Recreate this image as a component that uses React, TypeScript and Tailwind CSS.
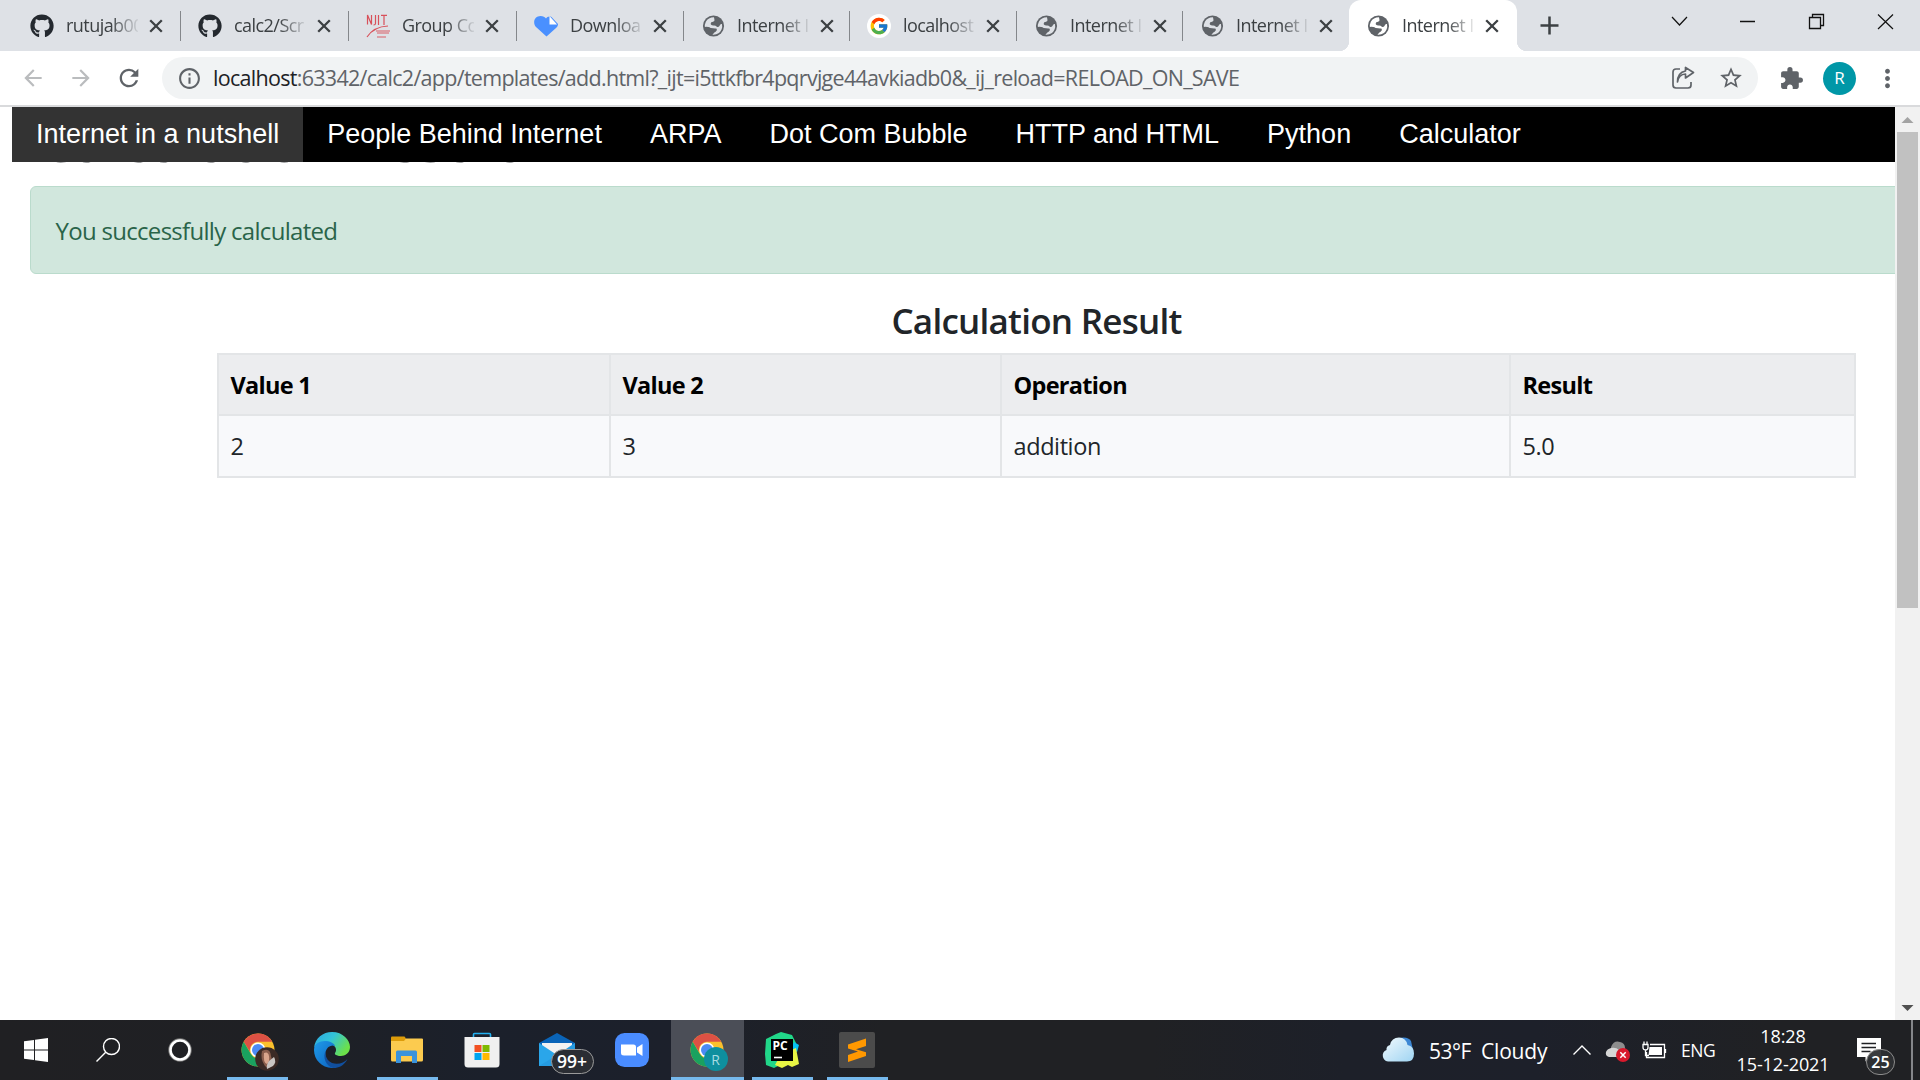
import React from "react";
import { FaGithub } from "react-icons/fa";
import { MdExtension, MdStarBorder, MdRefresh, MdArrowBack, MdArrowForward, MdInfoOutline, MdMoreVert } from "react-icons/md";
import { FcGoogle } from "react-icons/fc";

type TabKind = "github" | "njit" | "heart" | "globe" | "google";

const tabs: { kind: TabKind; label: string; width: string; active?: boolean }[] = [
  { kind: "github", label: "rutujab00", width: "w-[168px]" },
  { kind: "github", label: "calc2/Scr", width: "w-[168px]" },
  { kind: "njit", label: "Group Co", width: "w-[168px]" },
  { kind: "heart", label: "Downloa", width: "w-[167px]" },
  { kind: "globe", label: "Internet I", width: "w-[166px]" },
  { kind: "google", label: "localhost", width: "w-[167px]" },
  { kind: "globe", label: "Internet I", width: "w-[166px]" },
  { kind: "globe", label: "Internet I", width: "w-[166px]" },
  { kind: "globe", label: "Internet I", width: "w-[168px]", active: true },
];

function Favicon({ kind, active }: { kind: TabKind; active?: boolean }) {
  if (kind === "github") return <FaGithub className="size-6 text-[#24292f]" />;
  if (kind === "globe")
    return (
      <svg viewBox="0 0 24 24" className="ml-px size-[24px]">
        <circle cx="12" cy="12" r="11" fill="#5f6368" />
        <path
          d="M12.500 2.800Q6.500 2.800 4 7.500 2.600 10.500 3 13q3.500-.2 6 1.200 2.200 1.600 1 3.400-.6 1.400 1 3.400 7 .5 9.500-5.500 1-3 .3-5.500-1.800-.5-2.300 1.500-.7 2-3 1.200-1.500-1.500-3.500-1.200-2.500.2-3-1.500Q9 7.500 11.500 7.500q2-.2 1.500-2-.2-1.500-.5-2.700z"
          fill={active ? "#ffffff" : "#dee1e6"}
        />
        <path d="M9 14.200q4 .5 6 .3 1.500 1.500-.5 3.200-2 1-3.500 3.300-7-.5-8-8 3-.5 6 1.200z" fill="#5f6368" />
      </svg>
    );
  if (kind === "google")
    return (
      <span className="flex size-6 items-center justify-center rounded-full bg-white">
        <FcGoogle className="size-5" />
      </span>
    );
  if (kind === "njit")
    return (
      <svg viewBox="0 0 24 24" className="size-6" fill="none" stroke="#d8505a">
        <path d="M1.500 10.500V1l4 9.500V1M9.500 1v8.500q0 1.500-2 1.500M12.500 1v10M15 1.300h6M18 1.500v9.500" strokeWidth="1.200" />
        <path d="M1 23Q8 12.500 22 12" strokeWidth="1.200" />
        <path d="M10 17h14M11 19h12M11 23h9" strokeWidth="1.300" opacity=".6" />
      </svg>
    );
  return (
    <svg viewBox="0 0 24 24" className="size-6">
      <path d="M12.500 22.500 2 13C-2 8 1 2 6.500 2 9 2 11 3 12 4.500 13 3 15 2 17.500 3L24 10c0 2-1 3-2 4z" fill="#4a90ff" />
      <path d="M15.500 2v8.500H23z" fill="#fff" />
    </svg>
  );
}

function Tab({ kind, label, width, active }: (typeof tabs)[number]) {
  return (
    <div className={`${width} relative flex h-[51px] shrink-0 items-center ${active ? "rounded-t-[12px] bg-white" : ""}`}>
      {active && (
        <>
          <span className="absolute bottom-0 -left-2.5 size-2.5 bg-[radial-gradient(circle_at_0_0,transparent_10px,white_10.5px)]" />
          <span className="absolute -right-2.5 bottom-0 size-2.5 bg-[radial-gradient(circle_at_100%_0,transparent_10px,white_10.5px)]" />
        </>
      )}
      <span className="ml-[17px] flex w-6 justify-center">
        <Favicon kind={kind} active={active} />
      </span>
      <span className="-mt-px ml-3 w-[72px] overflow-hidden text-[18px] leading-6 tracking-[-0.55px] whitespace-nowrap text-[#3c4043] [mask-image:linear-gradient(to_right,black_62%,rgba(0,0,0,0.1)_100%)]">
        {label}
      </span>
      <svg viewBox="0 0 20 20" className="ml-[8px] size-5" stroke="#3c4043" strokeWidth="2.300">
        <path d="M4.200 4.200l11.600 11.600M15.800 4.200L4.200 15.800" />
      </svg>
    </div>
  );
}

function TabStrip() {
  return (
    <div className="flex h-[51px] bg-[#dee1e6] pl-[13px]">
      {tabs.map((t, i) => (
        <div key={i} className="relative">
          <Tab {...t} />
          {i < 7 && <span className="absolute top-[11px] right-0 h-[30px] w-[1.5px] bg-[#84878b]" />}
        </div>
      ))}
      <svg viewBox="0 0 25 25" className="mt-[13px] ml-[20px] size-[25px]" stroke="#3c4043" strokeWidth="2.500">
        <path d="M12.500 3.500v18M3.500 12.500h18" />
      </svg>
      <svg viewBox="0 0 260 51" className="ml-[98px] h-[51px] w-[260px]" fill="none" stroke="#111" strokeWidth="1.200">
        <path d="M12 17l7.500 8 7.500-8" />
        <path d="M80 21.500h15" strokeWidth="1.500" />
        <path d="M149.500 17.500h11v11h-11zM152.500 17.500v-3h11v11h-3" strokeWidth="1.300" />
        <path d="M218 14.500l15 14.500M233 14.500L218 29" />
      </svg>
    </div>
  );
}

function Toolbar() {
  return (
    <div className="flex h-14 items-center border-b-2 border-[#d9dadc] bg-white text-[#5f6368]">
      <MdArrowBack className="ml-5 size-[26px] text-[#babcbe]" />
      <MdArrowForward className="ml-[22px] size-[26px] text-[#babcbe]" />
      <MdRefresh className="ml-[21px] size-[28px]" />
      <div className="ml-[19px] flex h-[42px] w-[1596px] items-center rounded-full bg-[#f1f3f4]">
        <MdInfoOutline className="ml-[15px] size-[25px]" />
        <span className="ml-[11px] text-[21.500px] leading-7 tracking-[-0.71px] whitespace-nowrap text-[#5f6368]">
          <span className="text-[#202124]">localhost</span>:63342/calc2/app/templates/add.html?_ijt=i5ttkfbr4pqrvjge44avkiadb0&amp;_ij_reload=RELOAD_ON_SAVE
        </span>
        <svg viewBox="0 0 24 24" className="mr-[23px] ml-auto size-6" fill="none" stroke="currentColor" strokeWidth="1.700">
          <path d="M9 3H5Q2 3 2 6v13Q2 22 5 22h12q3 0 3-3v-3" />
          <path d="M6.500 16q1-7.500 8-8V12l8-5.500L14.500 1.500V5Q6.500 6.500 6.500 16z" strokeLinejoin="round" />
        </svg>
        <MdStarBorder className="mr-[14px] size-[26px]" />
      </div>
      <MdExtension className="ml-[21px] size-[25px]" />
      <span className="ml-[19px] flex size-[33px] items-center justify-center rounded-full bg-[#0097a7] text-[17px] text-white">R</span>
      <MdMoreVert className="ml-[17px] size-[29px]" />
    </div>
  );
}

const navItems = ["Internet in a nutshell", "People Behind Internet", "ARPA", "Dot Com Bubble", "HTTP and HTML", "Python", "Calculator"];

function Page() {
  return (
    <div className="flex h-[913px]">
      <main className="w-[1895px] overflow-hidden">
        <nav className="relative z-10 ml-3 flex h-[55px] bg-black font-['Liberation_Sans',sans-serif] text-[27px] leading-[55px] whitespace-nowrap text-white">
          {navItems.map((n, i) => (
            <a key={n} className={`px-6 ${i === 0 ? "bg-[#333]" : ""}`}>
              {n}
            </a>
          ))}
        </nav>
        <h1 className="-mt-[64px] ml-[38px] h-[64px] text-[59px] leading-[82px] font-semibold tracking-[-1.9px] whitespace-nowrap text-[#4a4d50]">Calculation Result</h1>
        <div className="mt-6 ml-[30px] flex h-[88px] w-[1900px] items-center rounded-md border-[1.500px] border-[#badbcc] bg-[#d1e7dd] pt-px pl-[24.500px] text-[24px] tracking-[-0.7px] text-[#2a6449]">
          You successfully calculated
        </div>
        <div className="mt-[24px] ml-[217px] w-[1639px]">
          <h2 className="h-[55px] text-center text-[35px] leading-[46px] font-semibold tracking-[-0.75px] text-[#212529]">Calculation Result</h2>
          <div className="grid grid-cols-[392px_391px_509px_345px] border-t-2 border-l-2 border-[#e3e5e7] text-[23.500px] text-[#212529]">
            {["Value 1", "Value 2", "Operation", "Result"].map((t) => (
              <div key={t} className="h-[61px] border-r-2 border-b-2 border-[#e3e5e7] bg-[#ecedef] pl-[11.500px] leading-[61px] font-bold tracking-[-0.7px] text-black">
                {t}
              </div>
            ))}
            {["2", "3", "addition", "5.0"].map((t) => (
              <div key={t} className="h-[62px] border-r-2 border-b-2 border-[#e3e5e7] bg-[#f8f9fb] pl-[11.500px] leading-[61px] tracking-[-0.4px]">
                {t}
              </div>
            ))}
          </div>
        </div>
      </main>
      <div className="flex w-[25px] flex-col items-center bg-[#f1f1f1]">
        <svg viewBox="0 0 25 25" className="size-[25px]">
          <path d="M6.500 16h12l-6-6z" fill="#a3a3a3" />
        </svg>
        <div className="h-[476px] w-[21px] bg-[#c1c1c1]" />
        <svg viewBox="0 0 25 25" className="mt-auto size-[25px]">
          <path d="M6.500 10h12l-6 6z" fill="#505050" />
        </svg>
      </div>
    </div>
  );
}

function ChromeLogo() {
  return (
    <svg viewBox="0 0 34 34" className="size-[34px]">
      <circle cx="17" cy="17" r="16.500" fill="#fbc02d" />
      <path d="M2.700 8.800A16.500 16.500 0 0 1 31.300 8.800H17a8.200 8.200 0 0 0-7.800 10.500z" fill="#dd5144" />
      <path d="M2.700 8.800A16.500 16.500 0 0 0 17 33.500l7.200-12.400A8.200 8.200 0 0 1 9.900 21.100z" fill="#1aa15f" />
      <circle cx="17" cy="17" r="7.600" fill="#fff" />
      <circle cx="17" cy="17" r="6" fill="#4c8bf5" />
    </svg>
  );
}

function TaskItem({ children, open, active }: { children: React.ReactNode; open?: boolean; active?: boolean }) {
  return (
    <div className="relative flex h-[60px] w-[75px] items-center justify-center">
      {active && <span className="absolute inset-y-0 left-[1px] w-[73px] bg-[#4b4e57]" />}
      <span className="relative -left-px">{children}</span>
      {open && <span className={`absolute bottom-0 h-[3px] bg-[#76b9ed] ${active ? "left-[1px] w-[73px]" : "left-[7px] w-[61px]"}`} />}
    </div>
  );
}

function Taskbar() {
  return (
    <footer className="flex h-[60px] bg-[linear-gradient(to_right,#202023_0%,#1f2024_14%,#1b202b_25%,#1c202b_35%,#202124_46%,#202124_60%,#1d2029_70%,#1d202a_80%,#202124_92%)] text-white">
      <div className="flex w-[72px] items-center justify-center">
        <svg viewBox="0 0 24 24" className="size-6" fill="#fff">
          <path d="M0 3.300 10 2v9.500H0zM11 1.800 24 0v11.500H11zM0 12.500h10V22L0 20.700zM11 12.500h13V24l-13-1.800z" />
        </svg>
      </div>
      <div className="flex w-[72px] items-center justify-center">
        <svg viewBox="0 0 24 24" className="size-6" fill="none" stroke="#fff" strokeWidth="1.400">
          <circle cx="15.500" cy="8.500" r="8" />
          <path d="M9.700 14.300.5 23.500" />
        </svg>
      </div>
      <div className="flex w-[76px] items-center justify-center pr-[4px]">
        <svg viewBox="0 0 24 24" className="size-6" fill="none">
          <circle cx="12" cy="12" r="11" stroke="#777" strokeWidth="1.500" />
          <circle cx="12" cy="12" r="9.500" stroke="#fff" strokeWidth="2.600" />
        </svg>
      </div>
      <TaskItem open>
        <div className="relative ml-0.5">
          <ChromeLogo />
          <svg viewBox="0 0 24 24" className="absolute -right-1 -bottom-1 size-6">
            <circle cx="12" cy="12" r="11.800" fill="#3b2a25" />
            <path d="M7 4q8-4 9 5l2 8q-4 6-8 2-5-7-3-15" fill="#8a5e4d" />
            <path d="M9 6q4-2 5 3t-2 8q-4-1-3-11" fill="#d9a58c" />
            <path d="M14 14l5-4q3 5-1 9l-6 3q-1-4 2-8" fill="#c9c5c2" />
          </svg>
        </div>
      </TaskItem>
      <TaskItem>
        <svg viewBox="0 0 36 36" className="size-9">
          <defs>
            <linearGradient id="edgeA" x1="0" x2="1" y1="0" y2=".5">
              <stop stopColor="#2ba6e0" />
              <stop offset=".5" stopColor="#33c4d8" />
              <stop offset="1" stopColor="#6be04a" />
            </linearGradient>
            <linearGradient id="edgeB" x1="0" x2="1" y1="0" y2="1">
              <stop stopColor="#1f9be8" />
              <stop offset="1" stopColor="#0c62c0" />
            </linearGradient>
          </defs>
          <path d="M0 16C1 6 9 0 18 0c11 0 18 8 18 15 0 6-5 9-9 9-5 0-7-1.500-6-3 2-3 1-6-2-8C12 8 3 10 0 16z" fill="url(#edgeA)" />
          <path d="M0 18C0 11 7 8.500 12 9c6 .5 9 4 9 5-8-2-11 6-9 12 2 6 6 9 10 9.500C10 38 0 29 0 18z" fill="url(#edgeB)" />
          <path d="M15 14c-6 4-4 14 3 17 6 2 12 0 15.500-4C30 34 24 36 20 36 12 35 8 25 12 18q1-3 3-4z" fill="#114f9e" />
          <path d="M18 13.500q4 2 3.300 5.500-2 3 .7 4.300 4 1.700 11 0-1.500 3-6 3.700-9 1-12-5.500-1.500-5 3-8z" fill="#1b202b" />
        </svg>
      </TaskItem>
      <TaskItem open>
        <svg viewBox="0 0 32 28" className="h-7 w-8">
          <path d="M0 1.500Q0 .5 1 .5h12.500l1.500 2V8H0z" fill="#dd9c0a" />
          <path d="M0 5h13l2-2.500h16q1 0 1 1V24q0 1.500-1.500 1.500h-29Q0 25.500 0 24z" fill="#fccb4f" />
          <path d="M5 27V16q0-1.500 1.500-1.500h18Q26 14.500 26 16v11h-5v-7H10v7z" fill="#3a93dc" />
        </svg>
      </TaskItem>
      <TaskItem>
        <svg viewBox="0 0 36 36" className="size-9">
          <path d="M9.500 6V2.500Q9.500 1.500 10.500 1.500h15q1 0 1 1V6" fill="none" stroke="#22b0f0" strokeWidth="1.600" />
          <path d="M.5 5h35v27q0 3.500-3.500 3.500H4Q.5 35.500.5 32z" fill="#f0f0f0" />
          <path d="M10.500 13h7v7h-7z" fill="#f25022" />
          <path d="M18.500 13h7v7h-7z" fill="#7fba00" />
          <path d="M10.500 21h7v7h-7z" fill="#00a4ef" />
          <path d="M18.500 21h7v7h-7z" fill="#ffb900" />
        </svg>
      </TaskItem>
      <TaskItem>
        <div className="relative h-9 w-9">
          <svg viewBox="0 0 36 36" className="size-9">
            <path d="M0 11 18 1l18 10v8H0z" fill="#0a64b8" />
            <path d="M3 11h30v10H3z" fill="#f2f2f2" />
            <path d="M0 11l18 12L36 11v23H0z" fill="#2aa6ea" />
            <path d="M0 34 20 22l16-11v23z" fill="#1f8fd8" opacity=".5" />
          </svg>
          <span className="absolute top-[17px] left-[12px] flex h-[25px] w-[43px] items-center justify-center rounded-full border border-[#9a9a9a] bg-[#2a2d33] text-[17.500px] leading-none font-semibold">99+</span>
        </div>
      </TaskItem>
      <TaskItem>
        <svg viewBox="0 0 34 34" className="size-[34px]">
          <rect width="34" height="34" rx="9.500" fill="#4a8cff" />
          <path d="M6 11.500h12.500q2.500 0 2.500 2.500v8.500H9Q6 22.500 6 20zM22 14.500l5.500-3.500v12L22 19.500z" fill="#fff" />
        </svg>
      </TaskItem>
      <TaskItem open active>
        <div className="relative">
          <ChromeLogo />
          <span className="absolute -right-1 -bottom-1 flex size-6 items-center justify-center rounded-full bg-[#0e8f9e] text-[14px] text-[#a8dce2]">R</span>
        </div>
      </TaskItem>
      <TaskItem open>
        <div className="relative size-9">
          <svg viewBox="0 0 36 36" className="size-9">
            <path d="M2 7 12 2l5-2 11 3 4 8-6 20-12 3-4 2-8-3L1 22z" fill="#21d789" />
            <path d="M30 10l5 3-2 7-6-2z" fill="#07c3f2" />
            <path d="M17 22l15-6 3 16-7 3-4-2-6 3-7-3z" fill="#e8f544" />
            <rect x="7" y="7" width="22" height="22" fill="#000" />
            <path d="M10 25.500h8" stroke="#fff" strokeWidth="1.600" />
          </svg>
          <span className="absolute top-[7px] left-[9px] text-[12px] leading-[14px] font-bold">PC</span>
        </div>
      </TaskItem>
      <TaskItem open>
        <svg viewBox="0 0 36 36" className="size-9">
          <rect width="36" height="36" rx="2" fill="#4b4b4b" />
          <path d="M9 12.500 27 6.500v7.500L17 17.200l10 3V24L9 30v-7l10-3.500-10-3z" fill="#ff9800" />
        </svg>
      </TaskItem>
      <div className="ml-auto flex w-[538px] items-center">
        <svg viewBox="0 0 32 25" className="-mt-0.5 h-[25px] w-8">
          <defs>
            <linearGradient id="cloud" x1="0" x2="1" y1="0" y2="1">
              <stop stopColor="#f2fafe" />
              <stop offset="1" stopColor="#9fd4f2" />
            </linearGradient>
          </defs>
          <path d="M17 1q9-2 12 3l2 9-8 5z" fill="#3c87d4" />
          <path d="M6 24.500A6 6 0 0 1 4.500 13 Q4 9 8 8 9.500 .5 17 .5 24 .5 25.500 8 32 9 32 16.500 32 24.500 25 24.500z" fill="url(#cloud)" />
        </svg>
        <span className="mt-1 ml-[15px] w-[52px] text-[21px] tracking-[-0.5px]">53°F</span>
        <span className="mt-1 w-[92px] text-[21px] tracking-[-0.2px]">Cloudy</span>
        <svg viewBox="0 0 18 10" className="h-[10px] w-[18px]" fill="none" stroke="#fff" strokeWidth="1.400">
          <path d="M.5 9.500 9 1l8.500 8.500" />
        </svg>
        <svg viewBox="0 0 26 24" className="mt-0.5 ml-[14px] h-6 w-[26px]">
          <path d="M6 8Q9 1 15 3q5 1 5 6l2 8H6z" fill="#8d8d8d" />
          <path d="M4 18q-4-1-3-5 1-3 5-4 5-1 8 2 3 4 6 7z" fill="#d6d6d6" />
          <circle cx="18" cy="16" r="7" fill="#d8192c" />
          <path d="M15.300 13.300l5.400 5.400m0-5.400l-5.400 5.400" stroke="#fff" strokeWidth="1.500" />
        </svg>
        <svg viewBox="0 0 26 20" className="ml-[10px] h-5 w-[26px]" fill="none" stroke="#fff" strokeWidth="1.300">
          <path d="M2 4.500h5v3q0 2.500-2.500 2.500T2 7.500zM3 1.500v3M6 1.500v3M4.500 10v5.500H8" />
          <path d="M9 4.500h14.500v13H5.500V12M24.500 9v4" />
          <path d="M8.500 7H21v8H7.500z" fill="#fff" stroke="none" />
        </svg>
        <span className="mt-px ml-[14px] w-[54px] text-[17.500px] tracking-[-0.4px]">ENG</span>
        <div className="flex w-[96px] flex-col items-center text-[18px] leading-[28px] tracking-[-0.1px] whitespace-nowrap">
          <span>18:28</span>
          <span>15-12-2021</span>
        </div>
        <div className="relative ml-[26px] h-[60px] w-[54px]">
          <svg viewBox="0 0 24 24" className="absolute top-[18px] left-0 size-6">
            <path d="M0 0h24v19H13l-4.500 4.500V19H0z" fill="#fff" />
            <path d="M4.500 5.500h14.500M4.500 9.500h14.500M4.500 13.500h9" stroke="#202124" strokeWidth="1.300" />
          </svg>
          <span className="absolute top-[29px] left-[9px] flex h-[26px] w-[29px] items-center justify-center rounded-full border border-[#8c8c8c] bg-[#2e3034]/95 text-[16px] font-semibold">25</span>
        </div>
        <span className="h-[60px] w-0.5 shrink-0 bg-[#85868a]" />
      </div>
    </footer>
  );
}

export default function App() {
  return (
    <div className="h-[1080px] w-[1920px] overflow-hidden bg-white font-['Open_Sans','Noto_Sans',sans-serif]">
      <TabStrip />
      <Toolbar />
      <Page />
      <Taskbar />
    </div>
  );
}
